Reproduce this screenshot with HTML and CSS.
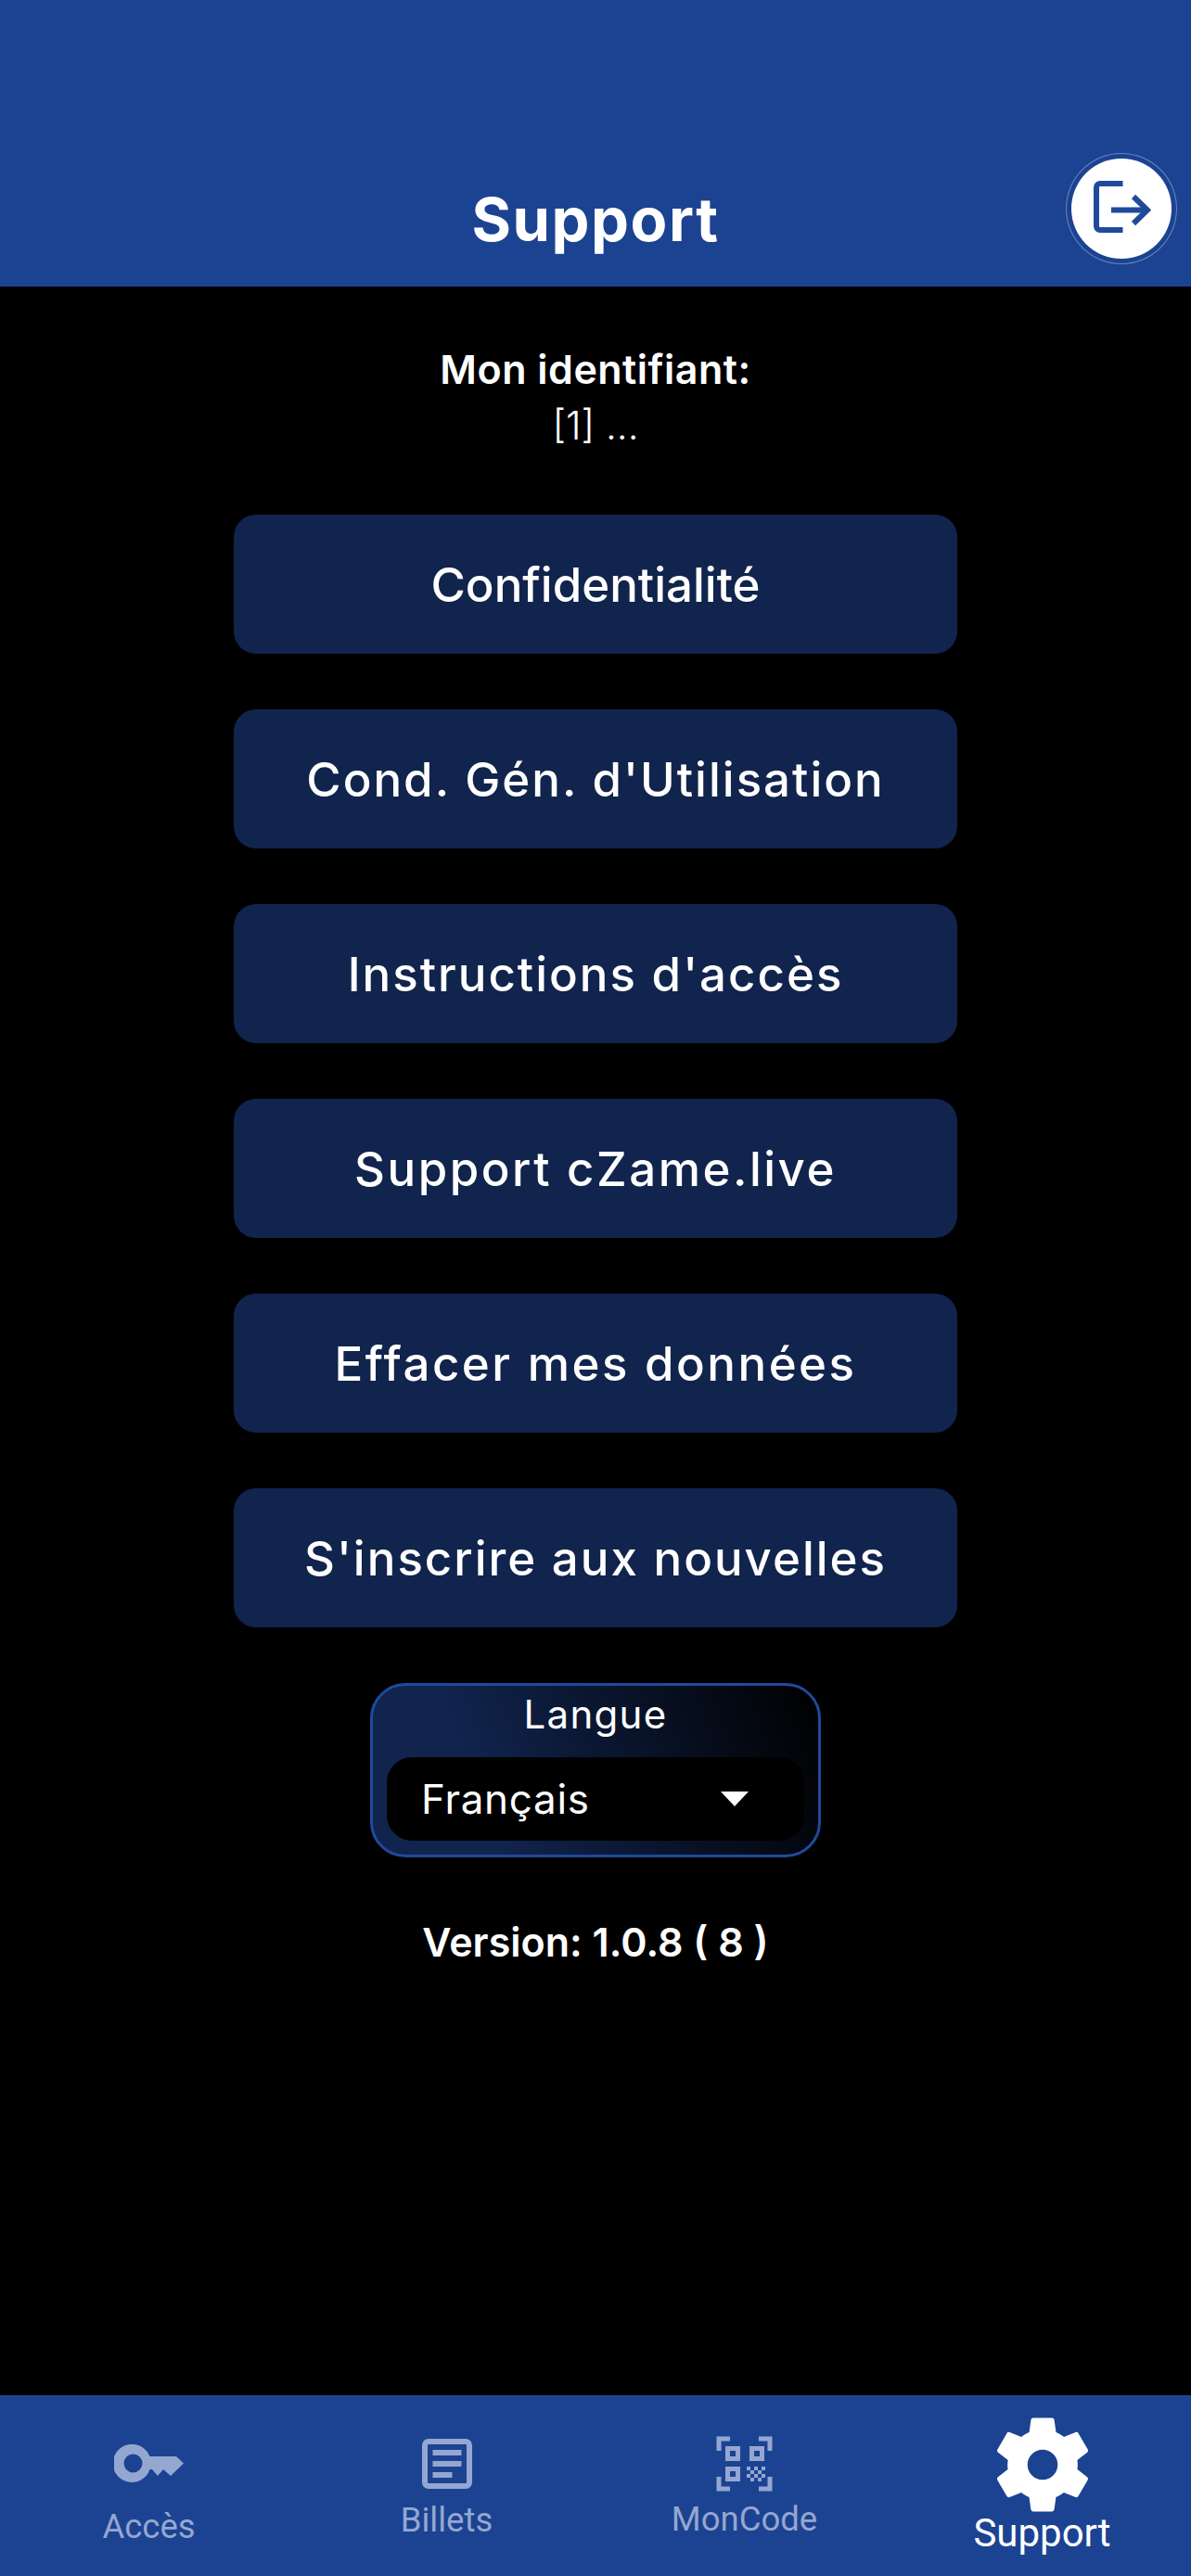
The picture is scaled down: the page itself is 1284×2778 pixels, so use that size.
FILE: index.html
```html
<!DOCTYPE html>
<html lang="fr">
<head>
    <meta charset="UTF-8">
    <meta name="viewport" content="width=device-width, initial-scale=1.0">
    <title>Support</title>
    <link rel="stylesheet" href="styles.css">
</head>
<body>
    <div class="app">
        <!-- Header -->
        <header class="top-bar">
            <h1 class="page-title">Support</h1>
            <button class="logout-btn" aria-label="Logout">
                <svg class="logout-icon" viewBox="0 0 64 60">
                    <path d="M33.500 6H9a4 4 0 0 0-4 4v42a4 4 0 0 0 4 4h24.500" transform="translate(0 -3)" />
                    <path d="M21 31.500H60" />
                    <path d="M45 17l15 14.500L45 46" />
                </svg>
            </button>
        </header>

        <main class="content">
            <div class="user-id">
                <p class="user-id-label">Mon identifiant:</p>
                <p class="user-id-value">[1] ...</p>
            </div>

            <!-- Menu buttons -->
            <button class="menu-btn menu-btn-tight">Confidentialité</button>
            <button class="menu-btn">Cond. Gén. d'Utilisation</button>
            <button class="menu-btn">Instructions d'accès</button>
            <button class="menu-btn menu-btn-wide">Support cZame.live</button>
            <button class="menu-btn menu-btn-wide">Effacer mes données</button>
            <button class="menu-btn">S'inscrire aux nouvelles</button>

            <!-- Language -->
            <div class="lang-box">
                <div class="lang-label">Langue</div>
                <div class="lang-select">
                    <span>Français</span>
                    <span class="lang-arrow"></span>
                </div>
            </div>

            <p class="version">Version: 1.0.8 ( 8 )</p>
        </main>

        <!-- Bottom navigation -->
        <nav class="tab-bar">
            <a class="tab tab-access">
                <svg class="tab-icon" width="75" height="41" viewBox="0 0 75 41">
                    <path fill-rule="evenodd" d="M20.500 0a20.500 20.500 0 0 1 18 13H67l8 7.500L61 34l-8-7-6 7-6-7h-2.500a20.500 20.500 0 1 1-18-27zm0 10.500a10 10 0 1 0 0 20 10 10 0 0 0 0-20z" />
                </svg>
                <span class="tab-label">Accès</span>
            </a>
            <a class="tab tab-tickets">
                <svg class="tab-icon" width="54" height="54" viewBox="0 0 54 54">
                    <rect class="outline" x="3" y="3" width="48" height="48" rx="4" />
                    <rect x="11.500" y="12" width="31" height="6" />
                    <rect x="11.500" y="24" width="31" height="6" />
                    <rect x="11.500" y="36" width="21" height="6" />
                </svg>
                <span class="tab-label">Billets</span>
            </a>
            <a class="tab tab-code">
                <svg class="tab-icon" width="61" height="60" viewBox="0 0 61 60">
                    <path class="outline" d="M3 16V3h12M46 3h12v13M3 44v13h12M58 44v13H46" />
                    <rect class="outline" x="12.500" y="13.500" width="11" height="11" />
                    <rect class="outline" x="38.500" y="13.500" width="11" height="11" />
                    <rect class="outline" x="12.500" y="35.500" width="11" height="11" />
                    <path d="M33 33h4v4h-4zM41 33h4v4h-4zM49 33h4v4h-4zM37 37h4v4h-4zM45 37h4v4h-4zM33 41h4v4h-4zM41 41h4v4h-4zM49 41h4v4h-4zM37 45h4v4h-4zM45 45h4v4h-4z" />
                </svg>
                <span class="tab-label">MonCode</span>
            </a>
            <a class="tab tab-support active">
                <svg class="tab-icon" width="126" height="126" viewBox="0 0 24 24">
                    <path fill-rule="evenodd" d="M19.140 12.940c.04-.3.06-.61.06-.94 0-.32-.02-.64-.07-.94l2.030-1.580c.18-.14.23-.41.12-.61l-1.920-3.320c-.12-.22-.37-.29-.59-.22l-2.390.96c-.5-.38-1.030-.7-1.620-.94l-.36-2.540c-.04-.24-.24-.41-.48-.41h-3.840c-.24 0-.43.17-.47.41l-.36 2.540c-.59.24-1.130.57-1.620.94l-2.390-.96c-.22-.08-.47 0-.59.22L2.740 8.870c-.12.21-.08.47.12.61l2.030 1.580c-.05.3-.09.63-.09.94s.02.64.07.94l-2.030 1.580c-.18.14-.23.41-.12.61l1.920 3.320c.12.22.37.29.59.22l2.390-.96c.5.38 1.030.7 1.620.94l.36 2.540c.05.24.24.41.48.41h3.840c.24 0 .44-.17.47-.41l.36-2.540c.59-.24 1.130-.56 1.620-.94l2.390.96c.22.08.47 0 .59-.22l1.920-3.320c.12-.22.07-.47-.12-.61l-2.010-1.580zM12 15.100a3.100 3.100 0 1 1 0-6.200 3.100 3.100 0 0 1 0 6.200z" />
                </svg>
                <span class="tab-label">Support</span>
            </a>
        </nav>
    </div>
</body>
</html>
```

FILE: styles.css
```css
* { box-sizing: border-box; }
html, body { margin: 0; padding: 0; }
body {
    background-color: #000;
    color: #fff;
    font-family: Inter, "Open Sans", sans-serif;
}
p { margin: 0; }
button {
    font-family: inherit;
    color: inherit;
    border: none;
    cursor: pointer;
}
.app {
    width: 1284px;
    height: 2778px;
    display: flex;
    flex-direction: column;
}

/* Header */
.top-bar {
    position: relative;
    height: 309px;
    flex: none;
    padding-top: 197px;
    background-color: #1c4392;
    text-align: center;
}
.page-title {
    margin: 0;
    font-size: 65px;
    line-height: 80px;
    font-weight: 700;
    letter-spacing: 1.500px;
}
.logout-btn {
    position: absolute;
    right: 15px;
    top: 165px;
    width: 120px;
    height: 120px;
    display: flex;
    align-items: center;
    justify-content: center;
    background-color: #fff;
    background-clip: content-box;
    border: 1px solid rgba(255,255,255,0.35);
    padding: 5px;
    border-radius: 50%;
}
.logout-icon {
    width: 64px;
    height: 60px;
    fill: none;
    stroke: #1f4a9c;
    stroke-width: 6;
}

/* Content */
.content {
    flex: 1;
    display: flex;
    flex-direction: column;
    align-items: center;
    padding-top: 63px;
}
.user-id {
    height: 183px;
    text-align: center;
}
.user-id-label {
    font-size: 43px;
    line-height: 52px;
    font-weight: 600;
    letter-spacing: 0.500px;
}
.user-id-value {
    margin-top: 4px;
    font-size: 42px;
    line-height: 62px;
    font-weight: 300;
}
.menu-btn {
    width: 780px;
    height: 150px;
    flex: none;
    margin-bottom: 60px;
    background-color: #11244e;
    border-radius: 24px;
    font-size: 51px;
    font-weight: 500;
    letter-spacing: 2px;
}
.menu-btn-tight { letter-spacing: 0; }
.menu-btn-wide { letter-spacing: 2.500px; }
.lang-box {
    width: 486px;
    height: 188px;
    flex: none;
    padding: 11px 15px 0;
    border: 3px solid #1f4a9c;
    border-radius: 38px;
    background: linear-gradient(70deg, #11244e 25%, #000 100%);
}
.lang-label {
    height: 66px;
    font-size: 42px;
    line-height: 40px;
    text-align: center;
    letter-spacing: 1.300px;
}
.lang-select {
    height: 90px;
    display: flex;
    align-items: center;
    justify-content: space-between;
    padding: 0 60px 0 37px;
    background-color: #000;
    border-radius: 27px;
    font-size: 44px;
    letter-spacing: 0.700px;
}
.lang-arrow {
    width: 0;
    height: 0;
    border-left: 15px solid transparent;
    border-right: 15px solid transparent;
    border-top: 16px solid #fff;
}
.version {
    margin-top: 63px;
    font-size: 43px;
    line-height: 56px;
    font-weight: 600;
}

/* Bottom navigation */
.tab-bar {
    height: 195px;
    flex: none;
    display: grid;
    grid-template-columns: repeat(4, 1fr);
    background-color: #1c4392;
}
.tab {
    display: flex;
    flex-direction: column;
    align-items: center;
    font-family: Roboto, sans-serif;
    color: #94a7d0;
}
.tab-icon { flex: none; fill: currentColor; }
.tab-icon .outline {
    fill: none;
    stroke: currentColor;
    stroke-width: 6;
}
.tab-code .outline { stroke-width: 5; }
.tab-label {
    font-size: 36.500px;
    line-height: 40px;
}
.tab-access { padding-top: 53px; }
.tab-access .tab-label { margin-top: 28px; }
.tab-tickets { padding-top: 47px; }
.tab-tickets .tab-label { margin-top: 14px; }
.tab-code { padding-top: 44px; }
.tab-code .tab-label { margin-top: 10px; }
.tab-support { padding-top: 12px; }
.tab-support .tab-label { margin-top: -9px; font-size: 42px; }
.tab.active { color: #fff; }
```
